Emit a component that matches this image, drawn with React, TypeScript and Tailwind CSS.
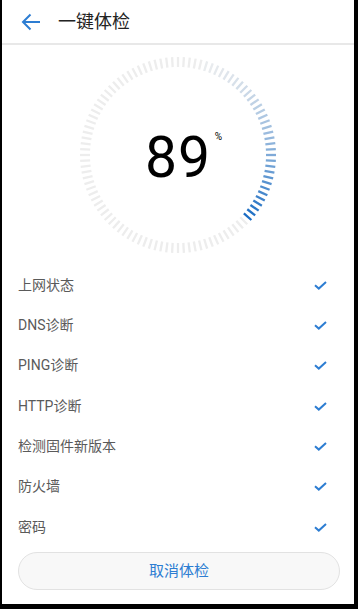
import React from "react";

const items = ["上网状态", "DNS诊断", "PING诊断", "HTTP诊断", "检测固件新版本", "防火墙", "密码"];

function Dial() {
  const N = 104;
  const cx = 100;
  const cy = 100;
  const rOut = 98;
  const rIn = 88;
  const start = 15;
  const end = 133;
  const ticks = [];
  for (let i = 0; i < N; i++) {
    const a = (i * 360) / N;
    const rad = (a * Math.PI) / 180;
    const x1 = cx + rIn * Math.sin(rad);
    const y1 = cy - rIn * Math.cos(rad);
    const x2 = cx + rOut * Math.sin(rad);
    const y2 = cy - rOut * Math.cos(rad);
    let color = "#ededed";
    if (a >= start && a <= end) {
      const t = Math.pow((a - start) / (end - start), 1.5);
      const g = [234, 236, 238];
      const b = [22, 106, 194];
      const c = g.map((v, k) => Math.round(v + (b[k] - v) * t));
      color = `rgb(${c[0]},${c[1]},${c[2]})`;
    }
    ticks.push(
      <line key={i} x1={x1} y1={y1} x2={x2} y2={y2} stroke={color} strokeWidth={2.3} strokeLinecap="butt" />
    );
  }
  return (
    <div className="relative w-[200px] h-[200px]">
      <svg width="200" height="200" viewBox="0 0 200 200">
        {ticks}
      </svg>
      <div className="absolute inset-0 flex items-center justify-center">
        <div className="relative mt-[4px]" style={{ fontFamily: "Roboto, 'Noto Sans', sans-serif" }}>
          <span className="text-[57px] leading-none text-black font-normal tracking-[1px]">89</span>
          <span className="absolute -right-[11px] top-[3px] text-[10px] text-black leading-none">%</span>
        </div>
      </div>
    </div>
  );
}

export default function App() {
  return (
    <div className="w-[358px] h-[609px] bg-black pl-[2px] pr-[4px] pb-[5px]">
      <div
        className="w-full h-full bg-white flex flex-col"
        style={{ fontFamily: "Roboto, 'Noto Sans CJK SC', sans-serif" }}
      >
        <div className="h-[43px] flex items-center shrink-0">
          <svg width="22" height="20" viewBox="0 0 22 20" className="ml-[18px]">
            <path d="M20 10 H3 M10.5 2.5 L3 10 L10.5 17.5" fill="none" stroke="#2d7dd2" strokeWidth="2" />
          </svg>
          <span className="ml-[16px] text-[18px] text-[#222]">一键体检</span>
        </div>
        <div className="h-[2px] bg-[#e8e8e8] shrink-0" />
        <div className="flex justify-center pt-[10px] shrink-0">
          <Dial />
        </div>
        <div className="flex flex-col mt-[10px] shrink-0">
          {items.map((t) => (
            <div key={t} className="h-[40.33px] flex items-center justify-between pl-[16px] pr-[27px]">
              <span className="text-[14px] text-[#5a5a5a]">{t}</span>
              <svg width="13" height="9" viewBox="0 0 13 9">
                <path d="M1 4.2 L4.8 7.6 L12 1" fill="none" stroke="#2d7dd2" strokeWidth="2" />
              </svg>
            </div>
          ))}
        </div>
        <div className="px-[16px] pr-[14px] mt-[5px]">
          <div className="h-[38px] rounded-full border border-[#e2e2e2] bg-[#f8f8f8] flex items-center justify-center">
            <span className="text-[15px] text-[#2d7dd2]">取消体检</span>
          </div>
        </div>
      </div>
    </div>
  );
}
